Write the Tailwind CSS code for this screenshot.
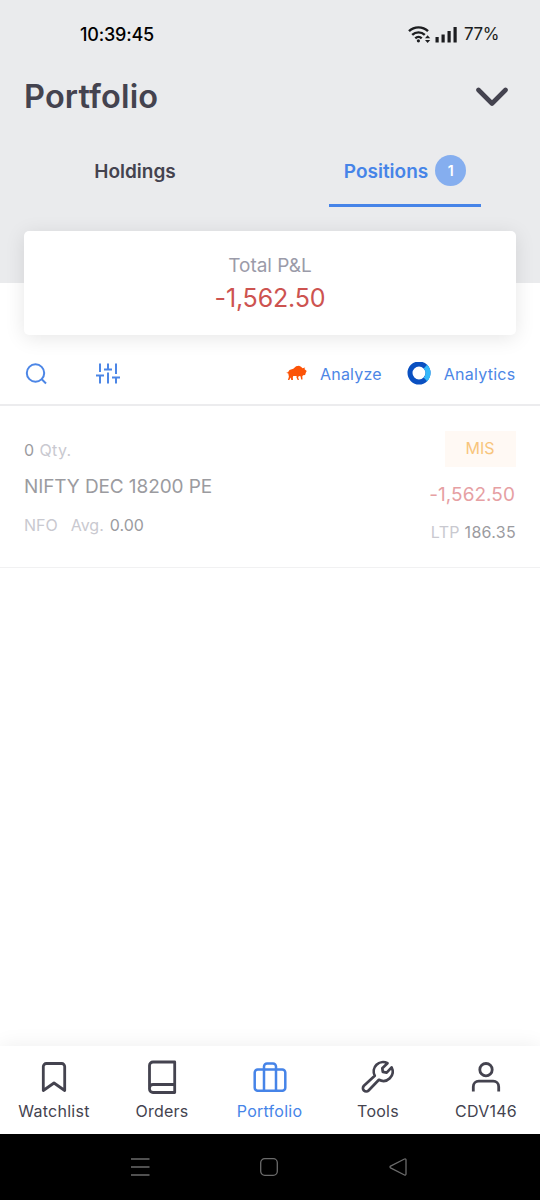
<!DOCTYPE html>
<html lang="en">
<head>
<meta charset="utf-8">
<meta name="viewport" content="width=device-width, initial-scale=1">
<title>Portfolio</title>
<script src="https://cdn.jsdelivr.net/npm/@tailwindcss/browser@4"></script>
</head>
<body class="flex h-[1200px] w-[540px] flex-col overflow-hidden bg-white font-['Inter',sans-serif] font-[375] whitespace-nowrap text-[#44434f]">
  <header class="h-[283px] shrink-0 bg-[#eaebed]">
    <div class="flex h-[68px] items-center justify-between pt-[2px] pr-[41px] pl-20 text-black">
      <span class="text-lg font-medium tracking-[-0.2px]">10:39:45</span>
      <div class="flex items-center text-[#1c1d20]">
        <svg class="h-5 w-[26px]" viewBox="0 0 26 20" fill="none" stroke="currentColor" stroke-width="2.4">
          <path d="M1 6.200a13.600 13.600 0 0 1 19 0M4.200 9.900a9 9 0 0 1 12.600 0M7.300 13.300a4.700 4.700 0 0 1 6.400 0"/>
          <circle cx="10.400" cy="15.800" r="1.600" fill="currentColor" stroke="none"/>
          <path d="M17 13.300 19.600 10.300l2.600 3zM17 15h5.200l-2.600 3z" fill="currentColor" stroke="none"/>
        </svg>
        <svg class="ml-[1px] h-5 w-6" viewBox="0 0 24 20" fill="currentColor"><path d="M.5 12h3.200v5.500H.500zM6.500 9.500h3.200v8H6.500zM12.500 6h3.200v11.500h-3.200zM18.500 2h3.200v15.500h-3.200z"/></svg>
        <span class="ml-[5px] text-[17px] font-normal tracking-[-0.4px]">77%</span>
      </div>
    </div>
    <div class="flex h-14 items-center justify-between pr-8 pl-6">
      <h1 class="pt-[2px] text-[32.5px] font-semibold tracking-[0.15px] [font-variant-ligatures:none]">Portfolio</h1>
      <svg class="h-6 w-8" viewBox="0 0 32 24" fill="none" stroke="currentColor" stroke-width="4.600" stroke-linecap="round" stroke-linejoin="round"><path d="M2.500 6 16 19.500 29.500 6"/></svg>
    </div>
    <nav class="flex h-[83px] text-[19px] font-semibold">
      <div class="flex flex-1 justify-center pt-[30.5px]"><span class="h-[34px] leading-[34px]">Holdings</span></div>
      <div class="flex flex-1 justify-center">
        <div class="flex h-full w-[152px] justify-center gap-[7px] border-b-[3px] border-[#4684e8] pt-[30.5px] text-[#4684e8]">
          <span class="leading-[34px]">Positions</span>
          <span class="mt-[0.5px] flex h-[31px] w-[31px] items-center justify-center rounded-full bg-[#85aeef] text-sm text-white">1</span>
        </div>
      </div>
    </nav>
  </header>

  <section class="mx-6 -mt-[52px] flex h-[104px] shrink-0 flex-col items-center rounded-[5px] bg-white pt-[19px] shadow-[0_3px_20px_rgba(0,0,0,0.1)]">
    <span class="h-8 text-[19px] leading-8 text-[#9b9ba9]">Total P&amp;L</span>
    <span class="h-8 text-[25px] leading-8 tracking-[-0.15px] text-[#cd5350]">-1,562.50</span>
  </section>

  <div class="flex h-[71px] shrink-0 items-center border-b-2 border-[#ececee] px-6 pt-2 text-base text-[#4c86e6]">
    <svg class="ml-[1px] h-6 w-6" viewBox="0 0 24 24" fill="none" stroke="currentColor" stroke-width="2"><circle cx="10.500" cy="11" r="8.700"/><path d="m16.500 17 4.500 4.500"/></svg>
    <svg class="ml-[47px] h-6 w-6" viewBox="0 0 24 24" fill="none" stroke="currentColor" stroke-width="2"><path d="M4 1.500v8.500M4 13.500v8M12 1.500V7M12 10.500v11M20 1.500v10.500M20 15.500v6M0 13.500h8M8 7.500h8M16 15.500h8"/></svg>
    <svg class="ml-[165.500px] h-5 w-[21px]" viewBox="0 0 21 20" fill="#fc5307"><path d="M.2 8.700 2 8.300 3.500 6l3.800-1.200 2.800-2.500L13 1.800l2 .9 1.600 1.500 2.600-.6-.8 1.500 2.300 2-.8 1.500-.8 2.400-1.900.3-.9 1 .2 3.200h-1.300l-.7-3.200-1.600-.2-.8 1.400.9 2.400h-1.300l-1.200-2.300.1-1.500-3.300-.2-.5 1.400.2 2.600H5.300l-.7-2.500-1.300 2.500H1.900l1-3.200-.6-3.300z"/></svg>
    <span class="ml-[13.500px] tracking-[0.2px]">Analyze</span>
    <svg class="ml-[25px] h-6 w-6" viewBox="0 0 24 24" fill="none" stroke-width="5"><circle cx="12" cy="11" r="9" stroke="#0a50c1"/><path d="M18.400 4.600a9 9 0 0 1 0 12.800" stroke="#34b8fa"/></svg>
    <span class="ml-[13px] tracking-[0.25px]">Analytics</span>
  </div>

  <article class="flex h-[162px] shrink-0 justify-between border-b border-[#f1f1f2] px-6 text-[#9b9ba0]">
    <div class="flex flex-col pt-[34px]">
      <div class="h-5 text-base leading-5">0 <span class="ml-[1px] tracking-[0.25px] text-[#c9c9d0]">Qty.</span></div>
      <div class="mt-[17px] h-5 text-[19px] leading-5 tracking-[-0.1px]">NIFTY DEC 18200 PE</div>
      <div class="mt-[18px] flex h-5 text-base leading-5"><span class="text-[#c9c9d0]">NFO</span><span class="ml-[13px] text-[#c9c9d0]">Avg.</span><span class="ml-[6px]">0.00</span></div>
    </div>
    <div class="flex flex-col items-end pt-[25px]">
      <span class="flex h-9 w-[71px] items-center justify-center bg-[#fff9f4] pr-[1px] pb-[2px] text-base text-[#f8c57c]">MIS</span>
      <span class="mt-[18px] mr-[1px] h-5 text-[19px] leading-5 tracking-[0.05px] text-[#e6a0a3]">-1,562.50</span>
      <div class="mt-[17px] h-5 text-base leading-5 tracking-[0.3px]"><span class="text-[#c9c9d0]">LTP</span> 186.35</div>
    </div>
  </article>

  <main class="flex-1"></main>

  <nav class="grid h-[88px] shrink-0 grid-cols-5 bg-white text-base tracking-[0.25px] shadow-[0_0_20px_rgba(0,0,0,0.07)]">
    <div class="flex flex-col items-center pt-[11px]">
      <svg class="h-10 w-10" viewBox="0 0 40 40" fill="none" stroke="currentColor" stroke-width="2.800" stroke-linejoin="round"><path d="M9.300 33.500V9.500a3 3 0 0 1 3-3h15.400a3 3 0 0 1 3 3v24L20 26z"/></svg>
      <span class="mt-[2px] leading-6">Watchlist</span>
    </div>
    <div class="flex flex-col items-center pt-[11px]">
      <svg class="h-10 w-10" viewBox="0 0 40 40" fill="none" stroke="currentColor" stroke-width="2.800" stroke-linejoin="round"><path d="M32.700 35.500H11a3.500 3.500 0 0 1-3.500-3.500V8.500A3.500 3.500 0 0 1 11 5h21.700zM7.500 31A3.500 3.500 0 0 1 11 27.500h21.700"/></svg>
      <span class="mt-[2px] leading-6">Orders</span>
    </div>
    <div class="flex flex-col items-center pt-[11px] text-[#4684e8]">
      <svg class="h-10 w-10" viewBox="0 0 40 40" fill="none" stroke="currentColor" stroke-width="2.500"><rect x="4.700" y="12.500" width="30.600" height="21.300" rx="3"/><path d="M14 34V9.500a3 3 0 0 1 3-3h6a3 3 0 0 1 3 3V34"/></svg>
      <span class="mt-[2px] mr-[1px] leading-6">Portfolio</span>
    </div>
    <div class="flex flex-col items-center pt-[11px]">
      <svg class="h-10 w-10" viewBox="0 0 40 40" fill="none" stroke="currentColor" stroke-width="2.700" stroke-linejoin="round"><path d="M29.500 6.300A9.300 9.300 0 0 0 16.800 18.800L5.900 28.800a3.300 3.300 0 0 0 4.700 4.700L20.900 22.800A9.300 9.300 0 0 0 33.600 10.400l-4.900 5.200-3.900-.7-.5-3.700z"/></svg>
      <span class="mt-[2px] leading-6">Tools</span>
    </div>
    <div class="flex flex-col items-center pt-[11px]">
      <svg class="h-10 w-10" viewBox="0 0 40 40" fill="none" stroke="currentColor" stroke-width="2.800"><circle cx="20" cy="12.700" r="6.200"/><path d="M7.300 34.500v-4.800a5.500 5.500 0 0 1 5.500-5.500h14.400a5.500 5.500 0 0 1 5.500 5.500v4.800"/></svg>
      <span class="mt-[2px] leading-6">CDV146</span>
    </div>
  </nav>

  <footer class="flex h-[66px] shrink-0 items-center justify-between bg-black pr-[132px] pl-[130px] text-[#6b6b6b]">
    <svg class="h-5 w-5" viewBox="0 0 20 20" fill="none" stroke="currentColor" stroke-width="1.300"><path d="M1 2h18.500M1 10h18.500M1 18h18.500"/></svg>
    <svg class="h-5 w-5" viewBox="0 0 20 20" fill="none" stroke="currentColor" stroke-width="1.300"><rect x="1.700" y="1.700" width="16.600" height="16.600" rx="4"/></svg>
    <svg class="h-5 w-5" viewBox="0 0 20 20" fill="none" stroke="currentColor" stroke-width="1.300" stroke-linejoin="round"><path d="M2.500 9.200 16.500 2a1 1 0 0 1 1.500.9v14.200a1 1 0 0 1-1.500.9L2.500 10.800a.9.900 0 0 1 0-1.600z"/></svg>
  </footer>
</body>
</html>
